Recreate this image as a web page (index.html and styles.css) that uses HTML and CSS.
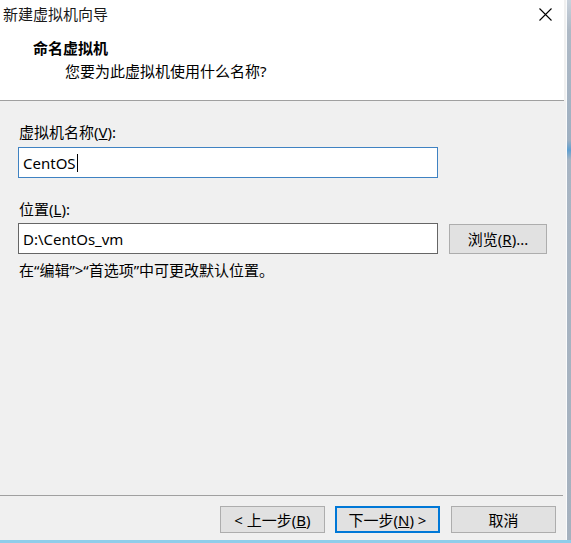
FILE: index.html
```html
<!DOCTYPE html>
<html lang="zh-CN">
<head>
<meta charset="utf-8">
<title>新建虚拟机向导</title>
<link rel="stylesheet" href="styles.css">
</head>
<body>
<div class="screen">
  <div class="row">
    <div class="window">
      <div class="header">
        <div class="titlebar">
          <span class="title">新建虚拟机向导</span>
          <svg class="close" width="13" height="13" viewBox="0 0 13 13" aria-hidden="true">
            <path d="M0.5 0.5 L12.5 12.5 M12.5 0.5 L0.5 12.5" stroke="#000" stroke-width="1.1" fill="none"/>
          </svg>
        </div>
        <div class="heading">命名虚拟机</div>
        <div class="subheading">您要为此虚拟机使用什么名称?</div>
      </div>
      <div class="content">
        <div class="label">虚拟机名称(<u>V</u>):</div>
        <div class="field focused"><span class="value">CentOS</span><span class="caret"></span></div>
        <div class="label second">位置(<u>L</u>):</div>
        <div class="field-row">
          <div class="field"><span class="value">D:\CentOs_vm</span></div>
          <div class="btn browse">浏览(<u>R</u>)...</div>
        </div>
        <div class="hint">在“编辑”&gt;“首选项”中可更改默认位置。</div>
      </div>
      <div class="footer">
        <div class="btn">&lt; 上一步(<u>B</u>)</div>
        <div class="btn default">下一步(<u>N</u>) &gt;</div>
        <div class="btn cancel">取消</div>
      </div>
    </div>
    <div class="edge-right"></div>
  </div>
  <div class="edge-bottom"></div>
</div>
</body>
</html>
```

FILE: styles.css
```css
html, body {
  margin: 0;
  padding: 0;
  width: 571px;
  height: 543px;
  overflow: hidden;
  background: #f0f0f0;
}

.screen {
  display: flex;
  flex-direction: column;
  width: 571px;
  height: 543px;
  font-family: "Noto Sans", "Noto Sans CJK SC", sans-serif;
  font-size: 15px;
  line-height: 20px;
  color: #000;
}

.row {
  display: flex;
  height: 540px;
}

.window {
  width: 567px;
  height: 540px;
  display: flex;
  flex-direction: column;
  background: #f0f0f0;
}

.edge-right {
  width: 4px;
  height: 540px;
  background: linear-gradient(#c9d2dc 0, #aeb9c5 30px, #9fb0c1 140px, #5f9fd0 150px, #a8b5c3 160px, #a5b1be 100%);
  border-left: 1px solid #fafbfc;
}

.edge-bottom {
  height: 3px;
  background: #8fcdea;
}

.header {
  height: 100px;
  background: #fff;
  border-bottom: 1px solid #a0a0a0;
  margin-right: 2px;
}

.titlebar {
  height: 28px;
  display: flex;
  align-items: center;
  justify-content: space-between;
  padding-left: 3px;
  padding-right: 12px;
}

.title {
  line-height: 28px;
  color: #1a1a1a;
}

.close {
  display: block;
}

.heading {
  margin-top: 10px;
  padding-left: 33px;
  font-weight: bold;
}

.subheading {
  margin-top: 3px;
  padding-left: 65px;
}

.content {
  flex: 1;
  padding: 21px 0 0 18px;
  display: flex;
  flex-direction: column;
  align-items: flex-start;
}

.label {
  padding-left: 1px;
}

.label.second {
  margin-top: 21px;
}

.field {
  box-sizing: border-box;
  width: 420px;
  height: 31px;
  margin-top: 5px;
  background: #fff;
  border: 1px solid #666;
  display: flex;
  align-items: center;
  padding-left: 4px;
}

.field.focused {
  border-color: #3f82c2;
}

.caret {
  display: inline-block;
  width: 1px;
  height: 18px;
  background: #000;
  margin-left: 1px;
}

.field-row {
  display: flex;
  align-items: flex-end;
  margin-top: -1px;
}

.field-row .field {
  margin-top: 5px;
}

.btn {
  box-sizing: border-box;
  width: 105px;
  height: 27px;
  background: #e1e1e1;
  border: 1px solid #adadad;
  display: flex;
  align-items: center;
  justify-content: center;
}

.btn.browse {
  width: 98px;
  height: 30px;
  margin-left: 11px;
}

.hint {
  margin-top: 6px;
  padding-left: 1px;
}

.footer {
  height: 45px;
  border-top: 1px solid #a0a0a0;
  margin-right: 3px;
  display: flex;
  justify-content: flex-end;
  align-items: flex-start;
  padding-top: 10px;
  padding-right: 7px;
  gap: 10px;
  box-sizing: border-box;
}

.btn.default {
  border: 2px solid #0078d7;
}

.btn.cancel {
  margin-left: 1px;
}
```
